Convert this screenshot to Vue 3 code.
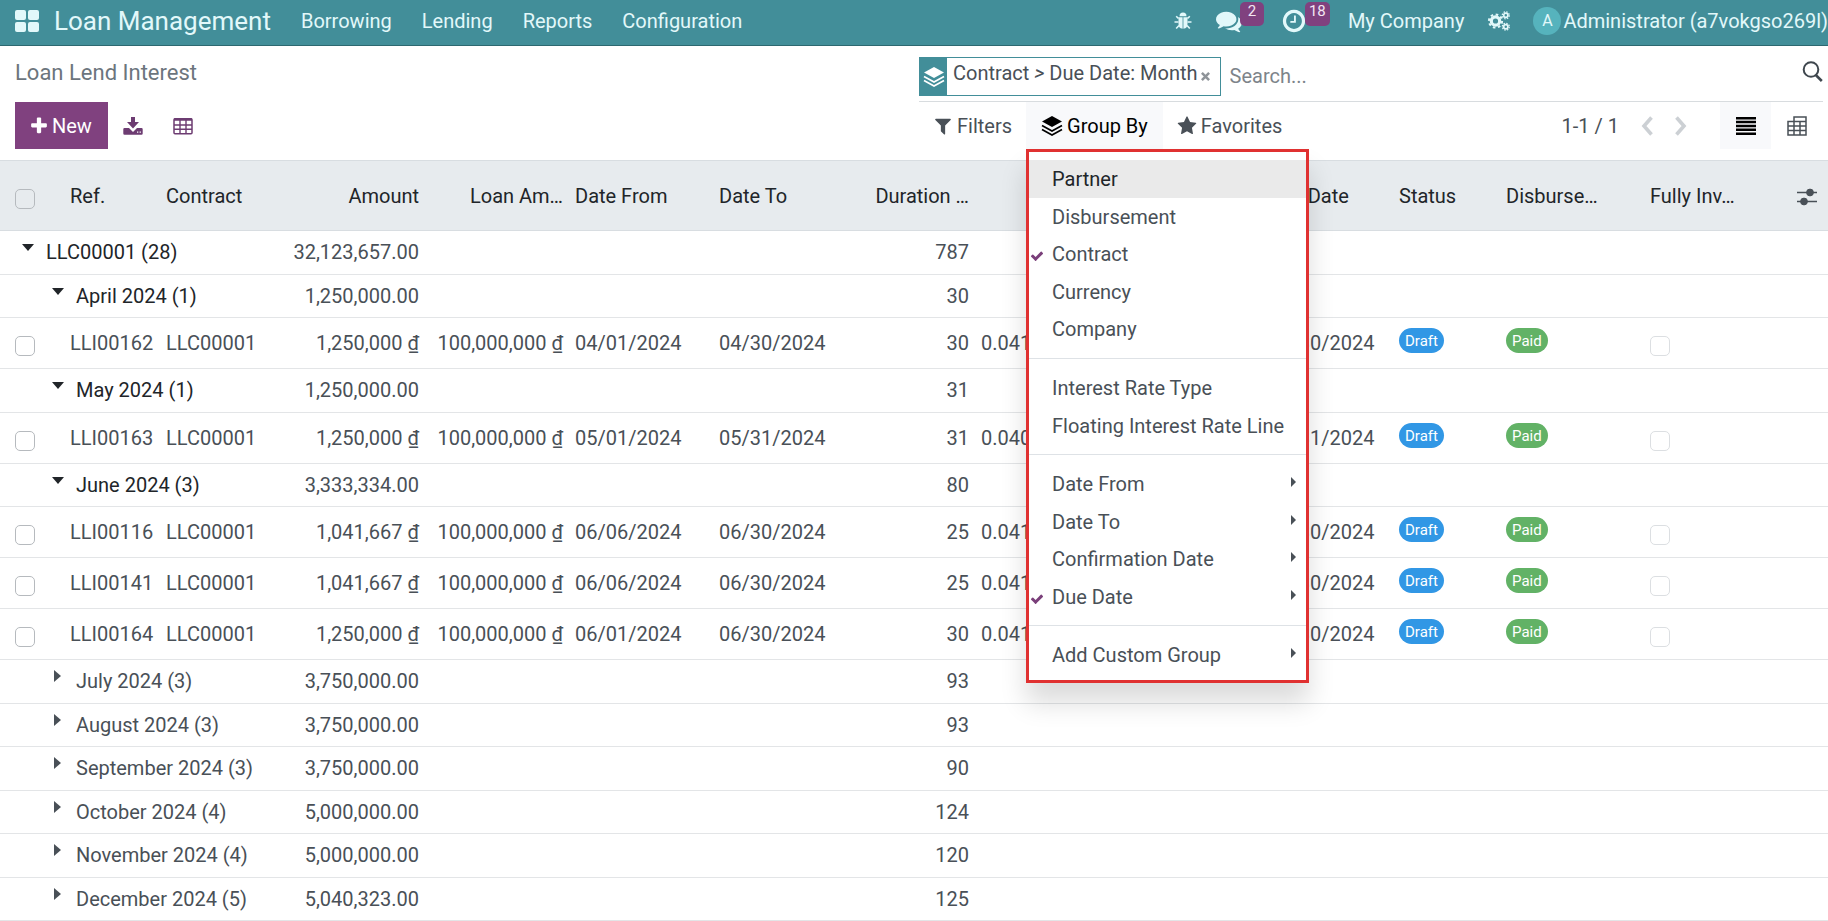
<script setup>
import { ref } from 'vue'

const search = ref('')
const menus = ['Borrowing', 'Lending', 'Reports', 'Configuration']

const record = (ref, amount, from, to, days, rate) => ({
  kind: 'record', ref, contract: 'LLC00001', amount, loan: '100,000,000 ₫', from, to, days, rate,
})
const group = (label, amount, days, open, level = 1) => ({ kind: 'group', label, amount, days, open, level })

const rows = [
  group('LLC00001 (28)', '32,123,657.00', 787, true, 0),
  group('April 2024 (1)', '1,250,000.00', 30, true),
  record('LLI00162', '1,250,000 ₫', '04/01/2024', '04/30/2024', 30, '0.041'),
  group('May 2024 (1)', '1,250,000.00', 31, true),
  record('LLI00163', '1,250,000 ₫', '05/01/2024', '05/31/2024', 31, '0.040'),
  group('June 2024 (3)', '3,333,334.00', 80, true),
  record('LLI00116', '1,041,667 ₫', '06/06/2024', '06/30/2024', 25, '0.041'),
  record('LLI00141', '1,041,667 ₫', '06/06/2024', '06/30/2024', 25, '0.041'),
  record('LLI00164', '1,250,000 ₫', '06/01/2024', '06/30/2024', 30, '0.041'),
  group('July 2024 (3)', '3,750,000.00', 93, false),
  group('August 2024 (3)', '3,750,000.00', 93, false),
  group('September 2024 (3)', '3,750,000.00', 90, false),
  group('October 2024 (4)', '5,000,000.00', 124, false),
  group('November 2024 (4)', '5,000,000.00', 120, false),
  group('December 2024 (5)', '5,040,323.00', 125, false),
]
let groupCount = 0
for (const row of rows) if (row.kind === 'group') row.roomy = groupCount++ % 2 === 0

const menuSections = [
  [{ label: 'Partner', hover: true }, { label: 'Disbursement' }, { label: 'Contract', checked: true }, { label: 'Currency' }, { label: 'Company' }],
  [{ label: 'Interest Rate Type' }, { label: 'Floating Interest Rate Line' }],
  [{ label: 'Date From', sub: true }, { label: 'Date To', sub: true }, { label: 'Confirmation Date', sub: true }, { label: 'Due Date', sub: true, checked: true }],
  [{ label: 'Add Custom Group', sub: true }],
]
</script>

<template>
  <div class="app">
    <header class="navbar">
      <button class="apps" aria-label="Apps">
        <svg width="24" height="22" viewBox="0 0 24 22" fill="currentColor">
          <rect width="11" height="10" rx="2" /><rect x="13" width="11" height="10" rx="2" />
          <rect y="12" width="11" height="10" rx="2" /><rect x="13" y="12" width="11" height="10" rx="2" />
        </svg>
      </button>
      <a class="brand" href="#">Loan Management</a>
      <nav class="menus">
        <a v-for="m in menus" :key="m" href="#">{{ m }}</a>
      </nav>
      <div class="systray">
        <button class="bug" aria-label="Debug">
          <svg width="18" height="18" viewBox="0 0 18 18" fill="currentColor" stroke="currentColor">
            <path d="M5.500 4.200a3.500 3.700 0 0 1 7 0z" stroke="none" />
            <path d="M4.500 5.300H8.600V16.800C5.500 16.500 4.500 14.500 4.500 12zM9.400 5.300H13.500V12C13.500 14.500 12.500 16.500 9.400 16.800z" stroke="none" />
            <path d="M4.500 6.500 2.200 4.200M13.500 6.500l2.300-2.300M4.500 10H.5M13.500 10h4M5 13.500l-2.800 3M13 13.500l2.800 3" fill="none" stroke-width="1.600" />
          </svg>
        </button>
        <button class="counter" aria-label="Messages">
          <svg width="26" height="26" viewBox="0 0 1792 1792" fill="currentColor"><path d="M1408 768q0 139-94 257t-256.500 186.500-353.500 68.500q-86 0-176-16-124 88-278 128-36 9-86 16h-3q-11 0-20.500-8t-11.500-21q-1-3-1-6.500t.5-6.500 2-6l2.500-5 3.500-5.500 4-5 4.500-5 4-4.500q5-6 23-25t26-29.500 22.500-29 25-38.500 20.500-44q-124-72-195-177t-71-224q0-139 94-257t256.500-186.500 353.500-68.500 353.500 68.500 256.500 186.500 94 257zm384 256q0 120-71 224.500t-195 176.500q10 24 20.500 44t25 38.500 22.500 29 26 29.500 23 25q1 1 4 4.500t4.500 5 4 5 3.500 5.500l2.500 5 2 6 .5 6.500-1 6.500q-3 14-13 22t-22 7q-50-7-86-16-154-40-278-128-90 16-176 16-271 0-472-132 58 4 88 4 161 0 309-45t264-129q125-92 192-212t67-254q0-77-23-152 129 71 204 178t75 230z" /></svg>
          <span class="badge">2</span>
        </button>
        <button class="counter clock" aria-label="Activities">
          <svg width="26" height="26" viewBox="0 0 1792 1792" fill="currentColor"><path d="M1024 544v448q0 14-9 23t-23 9h-320q-14 0-23-9t-9-23v-64q0-14 9-23t23-9h224v-352q0-14 9-23t23-9h64q14 0 23 9t9 23zm416 352q0-148-73-273t-198-198-273-73-273 73-198 198-73 273 73 273 198 198 273 73 273-73 198-198 73-273zm224 0q0 209-103 385.500t-279.500 279.500-385.500 103-385.500-103-279.500-279.500-103-385.500 103-385.500 279.500-279.500 385.500-103 385.500 103 279.500 279.500 103 385.500z" /></svg>
          <span class="badge">18</span>
        </button>
        <button class="company">My Company</button>
        <button class="tools" aria-label="Tools">
          <svg width="22" height="20" viewBox="0 0 22 20" fill="none" stroke="currentColor">
            <circle cx="7.500" cy="10" r="4.200" stroke-width="3.200" />
            <circle cx="7.500" cy="10" r="6.600" stroke-width="2" stroke-dasharray="2.600 2.580" />
            <circle cx="17.800" cy="4.300" r="2.100" stroke-width="1.700" />
            <circle cx="17.800" cy="4.300" r="3.500" stroke-width="1.200" stroke-dasharray="1.500 1.250" />
            <circle cx="17.800" cy="15.700" r="2.100" stroke-width="1.700" />
            <circle cx="17.800" cy="15.700" r="3.500" stroke-width="1.200" stroke-dasharray="1.500 1.250" />
          </svg>
        </button>
        <button class="user"><span class="avatar">A</span><span>Administrator (a7vokgso269l)</span></button>
      </div>
    </header>

    <section class="panel">
      <div class="side">
        <h1>Loan Lend Interest</h1>
        <div class="actions">
          <button class="new">
            <svg width="20" height="20" viewBox="0 0 1792 1792" fill="currentColor"><path d="M1600 736v192q0 40-28 68t-68 28h-416v416q0 40-28 68t-68 28h-192q-40 0-68-28t-28-68v-416h-416q-40 0-68-28t-28-68v-192q0-40 28-68t68-28h416v-416q0-40 28-68t68-28h192q40 0 68 28t28 68v416h416q40 0 68 28t28 68z" /></svg>
            New
          </button>
          <button class="tool" aria-label="Export">
            <svg width="20" height="18" viewBox="0 0 20 18" fill="currentColor">
              <path d="M8 0h4v5h4l-6 6.500L4 5h4z" />
              <path fill-rule="evenodd" d="M1.500 11H6l4 4 4-4h4.500a1.200 1.200 0 0 1 1.200 1.200v4.300a1.200 1.200 0 0 1-1.200 1.200h-17a1.200 1.200 0 0 1-1.200-1.200v-4.300A1.200 1.200 0 0 1 1.500 11zM14 14.500v1.200h1.300v-1.200zm2.600 0v1.200h1.300v-1.200z" />
            </svg>
          </button>
          <button class="tool" aria-label="Spreadsheet">
            <svg width="20" height="18" viewBox="0 0 20 18" fill="none" stroke="currentColor">
              <rect x="1" y="1.700" width="18" height="15" rx="1" stroke-width="1.500" />
              <path d="M1 2.500h18" stroke-width="2.500" />
              <path d="M1 8h18M1 12.300h18M7 3v13.500M13 3v13.500" stroke-width="1.400" />
            </svg>
          </button>
        </div>
      </div>

      <div class="side">
        <div class="searchbar">
          <div class="facet">
            <span class="facet-icon">
              <svg width="20" height="20" viewBox="0 0 20 20" fill="currentColor"><path d="M10 0 20 5.500 10 11 0 5.500z" /><path d="M0 9.500l10 5.500 10-5.500M0 13.500l10 5.500 10-5.500" fill="none" stroke="currentColor" stroke-width="1.700" /></svg>
            </span>
            <span class="facet-text">Contract <i>&gt;</i> Due Date: Month</span>
            <button class="remove" aria-label="Remove">
              <svg width="9" height="9" viewBox="0 0 10 10" stroke="currentColor" stroke-width="2.800"><path d="M1 1l8 8M9 1l-8 8" /></svg>
            </button>
          </div>
          <input v-model="search" type="text" placeholder="Search..." aria-label="Search">
          <button class="magnify" aria-label="Run search">
            <svg width="21" height="21" viewBox="0 0 21 21" fill="none" stroke="currentColor" stroke-width="2"><circle cx="9" cy="8.500" r="7.300" /><path d="M13.800 14l6 6" stroke-width="2.600" /></svg>
          </button>
        </div>
        <div class="options">
          <button class="opt">
            <svg width="20" height="20" viewBox="0 0 1792 1792" fill="currentColor"><path d="M1595 295q17 41-14 70l-493 493v742q0 42-39 59-13 5-25 5-27 0-45-19l-256-256q-19-19-19-45v-486l-493-493q-31-29-14-70 17-39 59-39h1280q42 0 59 39z" /></svg>
            Filters
          </button>
          <div class="dropdown">
            <button class="opt active" aria-expanded="true">
              <svg width="20" height="20" viewBox="0 0 20 20" fill="currentColor"><path d="M10 0 20 5.500 10 11 0 5.500z" /><path d="M0 9.500l10 5.500 10-5.500M0 13.500l10 5.500 10-5.500" fill="none" stroke="currentColor" stroke-width="1.700" /></svg>
              Group By
            </button>
            <div class="menu">
              <ul v-for="(section, i) in menuSections" :key="i">
                <li v-for="item in section" :key="item.label">
                  <button class="item" :class="{ hover: item.hover }">
                    <svg v-if="item.checked" class="check" width="14" height="14" viewBox="0 0 1792 1792" fill="currentColor"><path d="M1671 566q0 40-28 68l-724 724-136 136q-28 28-68 28t-68-28l-136-136-362-362q-28-28-28-68t28-68l136-136q28-28 68-28t68 28l294 295 656-657q28-28 68-28t68 28l136 136q28 28 28 68z" /></svg>
                    {{ item.label }}
                    <svg v-if="item.sub" class="arrow" width="5" height="10" viewBox="0 0 5 10" fill="currentColor"><path d="M0 0l5 5-5 5z" /></svg>
                  </button>
                </li>
              </ul>
            </div>
          </div>
          <button class="opt">
            <svg width="20" height="20" viewBox="0 0 1792 1792" fill="currentColor"><path d="M1728 647q0 22-26 48l-363 354 86 500q1 7 1 20 0 21-10.500 35.500t-30.500 14.500q-19 0-40-12l-449-236-449 236q-22 12-40 12-21 0-31.500-14.500t-10.500-35.500q0-6 2-20l86-500-364-354q-25-27-25-48 0-37 56-46l502-73 225-455q19-41 49-41t49 41l225 455 502 73q56 9 56 46z" /></svg>
            Favorites
          </button>
          <div class="pager">
            <span>1-1 / 1</span>
            <button aria-label="Previous" disabled><svg width="12" height="20" viewBox="0 0 12 20" fill="none" stroke="currentColor" stroke-width="3.600"><path d="M10.500 1.500 3 10l7.500 8.500" /></svg></button>
            <button aria-label="Next" disabled><svg width="12" height="20" viewBox="0 0 12 20" fill="none" stroke="currentColor" stroke-width="3.600"><path d="M1.500 1.500 9 10l-7.500 8.500" /></svg></button>
          </div>
          <button class="view active" aria-label="List view">
            <svg width="20" height="18" viewBox="0 0 20 18" fill="currentColor"><path d="M0 0h20v2.500H0zM0 3.800h20v2.500H0zM0 7.700h20v2.500H0zM0 11.600h20v2.500H0zM0 15.500h20V18H0z" /></svg>
          </button>
          <button class="view" aria-label="Pivot view">
            <svg width="20" height="20" viewBox="0 0 20 20" fill="none" stroke="currentColor" stroke-width="1.500"><path d="M1 5.500h6V1h12v18H1zM7 5.500V19M13 5.500V19M7 5.500h12M1 10h18M1 14.500h18" /></svg>
          </button>
        </div>
      </div>
    </section>

    <table>
      <colgroup>
        <col class="c-check"><col class="c-ref"><col class="c-contract"><col class="c-amount"><col class="c-loan">
        <col class="c-from"><col class="c-to"><col class="c-days"><col><col class="c-due"><col class="c-status">
        <col class="c-disb"><col class="c-inv"><col class="c-opt">
      </colgroup>
      <thead>
        <tr>
          <th class="pick"><input type="checkbox" aria-label="Select all"></th>
          <th>Ref.</th><th>Contract</th><th class="num">Amount</th><th class="num">Loan Am…</th>
          <th>Date From</th><th>Date To</th><th class="num">Duration …</th><th></th><th>Due Date</th>
          <th>Status</th><th>Disburse…</th><th>Fully Inv…</th>
          <th class="adjust">
            <button aria-label="Optional columns">
              <svg width="20" height="18" viewBox="0 0 20 18" fill="currentColor" stroke="currentColor"><path d="M0 4.500h20M0 13.500h20" stroke-width="1.500" /><circle cx="13" cy="4.500" r="3.400" /><circle cx="7" cy="13.500" r="3.400" /></svg>
            </button>
          </th>
        </tr>
      </thead>
      <tbody>
        <template v-for="row in rows" :key="row.ref || row.label">
          <tr v-if="row.kind === 'group'" class="group" :class="{ roomy: row.roomy, open: row.open, nested: row.level }">
            <th colspan="3" scope="row">
              <button class="toggle" :aria-expanded="row.open">
                <svg v-if="row.open" width="12" height="7" viewBox="0 0 12 7" fill="currentColor"><path d="M0 0h12L6 7z" /></svg>
                <svg v-else class="closed" width="7" height="12" viewBox="0 0 7 12" fill="currentColor"><path d="M0 0l7 6-7 6z" /></svg>
                {{ row.label }}
              </button>
            </th>
            <td class="num">{{ row.amount }}</td>
            <td colspan="3"></td>
            <td class="num">{{ row.days }}</td>
            <td colspan="6"></td>
          </tr>
          <tr v-else class="record">
            <td class="pick"><input type="checkbox" :aria-label="'Select ' + row.ref"></td>
            <td>{{ row.ref }}</td>
            <td>{{ row.contract }}</td>
            <td class="num">{{ row.amount }}</td>
            <td class="num">{{ row.loan }}</td>
            <td>{{ row.from }}</td>
            <td>{{ row.to }}</td>
            <td class="num">{{ row.days }}</td>
            <td>{{ row.rate }}</td>
            <td>{{ row.to }}</td>
            <td class="tag"><span class="pill draft">Draft</span></td>
            <td class="tag"><span class="pill paid">Paid</span></td>
            <td class="flag"><input type="checkbox" disabled :aria-label="row.ref + ' fully invoiced'"></td>
            <td></td>
          </tr>
        </template>
      </tbody>
    </table>
  </div>
</template>

<style>
body { background: #fff; overflow: hidden; }
</style>

<style scoped>
.app { font: 20px/30px Roboto, sans-serif; color: #495057; overflow: hidden; }
button { font: inherit; color: inherit; background: none; border: 0; padding: 0; cursor: pointer; white-space: nowrap; }
svg { display: block; flex: none; overflow: visible; }
a { color: inherit; text-decoration: none; }

.navbar { display: flex; align-items: center; height: 46px; padding-bottom: 3px; box-sizing: border-box; background: #428e99; border-bottom: 1px solid #2d6870; color: #e2f8fa; white-space: nowrap; }
.apps { margin: 0 15px 0 15px; }
.brand { font-size: 26px; margin-right: 30px; }
.menus { display: flex; gap: 30px; }
.systray { display: flex; align-items: center; margin-left: auto; }
.bug { margin-right: 24px; }
.counter { display: flex; position: relative; margin-right: 39px; }
.clock { margin-right: 41px; }
.badge { position: absolute; left: 24px; top: -6px; min-width: 24px; height: 24px; box-sizing: border-box; padding: 0 4px; border-radius: 5px; background: #80417f; color: #f3e6f3; font-size: 15px; line-height: 18px; text-align: center; }
.company { margin-right: 24px; }
.tools { margin-right: 23px; }
.user { display: flex; align-items: center; gap: 2px; }
.avatar { width: 28px; height: 28px; border-radius: 50%; background: #56b3bd; font-size: 16px; line-height: 28px; text-align: center; }

.panel { display: grid; grid-template-columns: 1fr 1fr; height: 114px; }
h1 { margin: 12px 0 0 15px; height: 44px; font-size: 22px; line-height: 30px; font-weight: 400; color: #6c757d; }
.actions { display: flex; align-items: center; margin-left: 15px; }
.new { display: flex; align-items: center; gap: 3px; height: 47px; padding: 0 16px 0 14px; background: #80417f; color: #fff; margin-right: 15px; }
.tool { color: #6d3c72; margin-right: 30px; }

.searchbar { display: flex; align-items: flex-start; height: 56px; box-sizing: border-box; padding-top: 11px; margin: 0 5px; border-bottom: 1px solid #d8dcdf; }
.facet { display: flex; height: 39px; box-sizing: border-box; border: 1px solid #428e99; white-space: nowrap; }
.facet-icon { display: flex; align-items: center; justify-content: center; width: 27px; background: #428e99; color: #fff; }
.facet-text { padding-left: 6px; }
.remove { color: #8f9499; padding: 0 10px 0 3px; }
.searchbar input { flex: 1; min-width: 0; height: 38px; padding: 0 9px; border: 0; outline: 0; background: none; font: inherit; color: inherit; }
.searchbar input::placeholder { color: #7d848a; opacity: 1; }
.magnify { padding-top: 4px; color: #3f474e; }
.options { display: flex; align-items: center; margin-left: 5px; height: 47px; }
.opt { display: flex; align-items: center; gap: 4px; height: 47px; padding: 0 14px 0 14px; }
.opt.active { gap: 5px; padding: 0 15px 0 16px; background: #f8f9fb; color: #000; }
.dropdown { position: relative; }
.pager { display: flex; align-items: center; gap: 22px; margin-left: auto; margin-right: 33px; }
.pager button { color: #ccd0d4; }
.view { display: flex; align-items: center; justify-content: center; width: 51px; height: 47px; }
.view.active { background: #f8f9fb; color: #000; }
.view:last-child { margin-right: 6px; }

.menu { position: absolute; z-index: 2; top: 47px; left: 0; min-width: 283px; box-sizing: border-box; padding: 8px 0 6px; border: 3px solid #e03131; background: #fff; box-shadow: 0 20px 25px rgba(0, 0, 0, 0.14); }
.menu ul { list-style: none; margin: 0; padding: 0; }
.menu ul + ul { margin-top: 10px; padding-top: 10px; border-top: 1px solid #dee2e6; }
.item { display: flex; align-items: center; position: relative; width: 100%; height: 38px; padding: 0 20px 0 23px; }
li:nth-child(even) .item { height: 37px; }
.item.hover { background: #eaeaea; color: #212529; }
.check { position: absolute; left: 1px; top: 14px; color: #7a3f7a; }
.arrow { position: absolute; right: 10px; top: 12px; }

table { width: 100%; table-layout: fixed; border-collapse: separate; border-spacing: 0; }
.c-check { width: 64px; } .c-ref { width: 96px; } .c-contract { width: 120px; } .c-amount { width: 145px; }
.c-loan { width: 144px; } .c-from { width: 144px; } .c-to { width: 143px; } .c-days { width: 119px; }
.c-due { width: 131px; } .c-status { width: 107px; } .c-disb { width: 144px; } .c-inv { width: 130px; } .c-opt { width: 54px; }
th, td { padding: 0 6px; box-sizing: border-box; font-weight: 400; text-align: left; white-space: nowrap; overflow: hidden; border-bottom: 1px solid #e3e5e7; }
thead th { height: 71px; background: #e7ebee; color: #212529; border-top: 1px solid #d8dde1; border-bottom-color: #d8dde1; }
.num { text-align: right; }
.pick { padding: 6px 0 0 15px; }
.flag { padding-top: 6px; }
input[type='checkbox'] { appearance: none; display: block; width: 20px; height: 20px; margin: 0; border: 1px solid #b6babe; border-radius: 5px; background: transparent; }
.flag input[type='checkbox'] { border-color: #dcdfe2; }
.adjust { padding: 2px 0 0 23px; }
.adjust button { display: block; color: #495057; }
.record td { height: 51px; }
.group th, .group td { height: 43px; }
.roomy th, .roomy td { height: 44px; padding-bottom: 2px; }
.toggle { display: flex; gap: 12px; padding-left: 16px; }
.nested .toggle { padding-left: 46px; }
.open .toggle { color: #212529; }
.toggle svg { margin-top: 7px; }
.toggle .closed { margin: 4px 3px 0 2px; }
.record .tag { padding-bottom: 5px; }
.pill { display: block; width: max-content; height: 25px; padding: 0 6px; border-radius: 13px; color: #fff; font-size: 15px; line-height: 26px; }
.draft { background: #3197e5; }
.paid { background: #62b266; }
</style>
